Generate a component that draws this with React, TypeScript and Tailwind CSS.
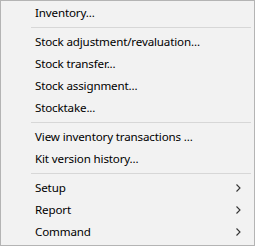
import React from "react";

type Item = { label: string; sub?: boolean } | "sep";

const items: Item[] = [
  { label: "Inventory..." },
  "sep",
  { label: "Stock adjustment/revaluation..." },
  { label: "Stock transfer..." },
  { label: "Stock assignment..." },
  { label: "Stocktake..." },
  "sep",
  { label: "View inventory transactions ..." },
  { label: "Kit version history..." },
  "sep",
  { label: "Setup", sub: true },
  { label: "Report", sub: true },
  { label: "Command", sub: true },
];

function Chevron() {
  return (
    <svg width="5" height="8" viewBox="0 0 5 8" className="block">
      <path d="M0.5 0.5 L4 4 L0.5 7.5" fill="none" stroke="#333" strokeWidth="1.1" />
    </svg>
  );
}

export default function App() {
  return (
    <div className="w-[255px] h-[246px] bg-[#f2f2f2] border border-[#b4b4b4] py-[1px] px-[2px] flex flex-col text-black text-[11.6px] tracking-[-0.15px]" style={{ fontFamily: '"Noto Sans", "Open Sans", sans-serif' }}>
      {items.map((it, i) =>
        it === "sep" ? (
          <div key={i} className="h-[7px] flex items-center pl-[28px] pr-[1px]">
            <div className="h-px w-full bg-[#d7d7d7]" />
          </div>
        ) : (
          <div key={i} className="h-[22px] shrink-0 flex items-center pl-[32px] pr-[11px] leading-none">
            <span className="flex-1 whitespace-nowrap">{it.label}</span>
            {it.sub && <Chevron />}
          </div>
        )
      )}
    </div>
  );
}
